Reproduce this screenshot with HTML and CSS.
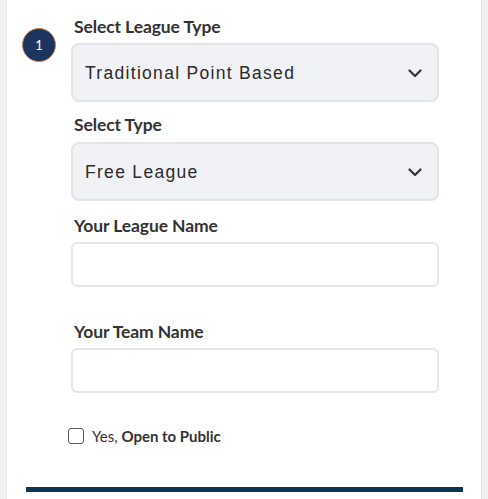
FILE: index.html
```html
<!DOCTYPE html>
<html>
<head>
<meta charset="utf-8">
<link rel="stylesheet" href="styles.css">
</head>
<body>
<div class="card">
  <div class="step">
    <div class="badge">1</div>
    <div class="fields">
      <div class="label l1">Select League Type</div>
      <div class="select">
        <span>Traditional Point Based</span>
        <svg class="chev" width="14" height="9" viewBox="0 0 14 9"><path d="M1.5 1.5 L7 7 L12.5 1.5" fill="none" stroke="#333" stroke-width="2.2" stroke-linecap="round" stroke-linejoin="round"/></svg>
      </div>
      <div class="label l2">Select Type</div>
      <div class="select">
        <span>Free League</span>
        <svg class="chev" width="14" height="9" viewBox="0 0 14 9"><path d="M1.5 1.5 L7 7 L12.5 1.5" fill="none" stroke="#333" stroke-width="2.2" stroke-linecap="round" stroke-linejoin="round"/></svg>
      </div>
      <div class="label l3">Your League Name</div>
      <div class="input"></div>
      <div class="label l4">Your Team Name</div>
      <div class="input"></div>
    </div>
  </div>
  <div class="check">
    <span class="box"></span>
    <span class="ctext">Yes, <b>Open to Public</b></span>
  </div>
  <div class="bar"></div>
</div>
</body>
</html>
```
FILE: styles.css
```css
html, body {
  margin: 0;
  padding: 0;
}
body {
  background: #f1f1f1;
  height: 499px;
  overflow: hidden;
  font-family: Lato, "Liberation Sans", sans-serif;
  color: #333;
}
.card {
  margin: 0 6px;
  background: #fff;
  border-left: 1px solid #e6e6e6;
  border-right: 1px solid #e3e3e3;
  height: 499px;
  box-sizing: border-box;
  padding-top: 15px;
}
.step {
  display: flex;
  align-items: flex-start;
  padding-left: 15px;
}
.badge {
  width: 32px;
  height: 32px;
  margin-top: 13px;
  border-radius: 50%;
  background: #1c355e;
  border: 1.5px solid #c9824f;
  color: #fff;
  font-size: 13px;
  font-weight: 400;
  display: flex;
  align-items: center;
  justify-content: center;
}
.fields {
  margin-left: 15px;
  width: 368px;
}
.label {
  font-weight: 700;
  font-size: 17.5px;
  line-height: 24px;
  color: #333;
  padding-left: 3px;
  letter-spacing: -0.1px;
}
.l1 { margin-bottom: 4px; }
.l2 { margin-top: 11px; margin-bottom: 5px; }
.l3 { margin-top: 13px; margin-bottom: 4px; }
.l4 { margin-top: 33px; margin-bottom: 4px; }
.select {
  height: 59px;
  box-sizing: border-box;
  border: 2px solid #e3e4e8;
  border-radius: 8px;
  background: #f1f2f6;
  display: flex;
  align-items: center;
  justify-content: space-between;
  padding: 1px 15px 0 12px;
  font-family: "Liberation Sans", Arial, sans-serif;
  font-size: 17.5px;
  letter-spacing: 1.3px;
  color: #2b2b2b;
}
.chev {
  display: block;
}
.input {
  height: 45px;
  box-sizing: border-box;
  border: 2px solid #e6e6e6;
  border-radius: 6px;
  background: #fff;
}
.check {
  display: flex;
  align-items: center;
  margin-top: 34px;
  padding-left: 61px;
  font-size: 15px;
  color: #333;
}
.box {
  width: 14px;
  height: 14px;
  border: 1px solid #5a5a5a;
  border-radius: 3px;
  background: #fff;
  margin-right: 8px;
}
.ctext b {
  font-weight: 700;
}
.bar {
  margin: 42px 0 0 19px;
  width: 437px;
  height: 5px;
  background: #0c3453;
}
```
